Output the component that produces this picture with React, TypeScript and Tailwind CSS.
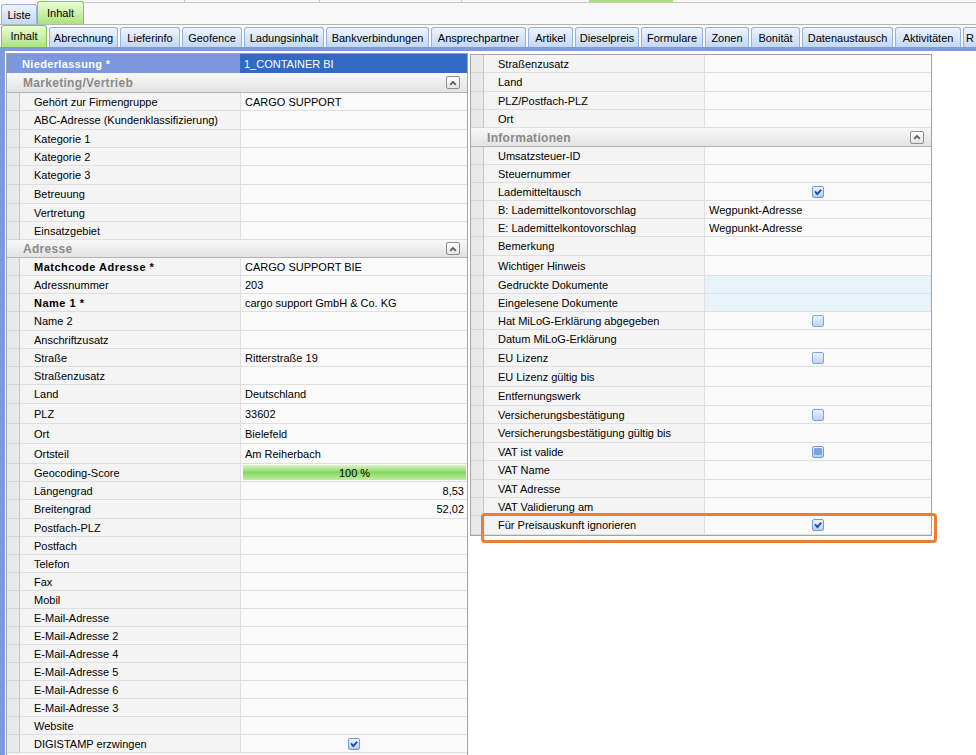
import React from "react";

type CheckState = "on" | "off" | "mixed";

interface Row {
  label: string;
  value?: string;
  h?: number;
  bold?: boolean;
  check?: CheckState;
  right?: boolean;
  progress?: boolean;
  tint?: boolean;
}

const rowHeight: Record<number, string> = {
  17: "h-[17px]",
  18: "h-[18px]",
  19: "h-[19px]",
  20: "h-[20px]",
  21: "h-[21px]",
};

const innerTabs: [string, string][] = [
  ["Abrechnung", "w-[69px]"],
  ["Lieferinfo", "w-[60px]"],
  ["Geofence", "w-[60px]"],
  ["Ladungsinhalt", "w-[80px]"],
  ["Bankverbindungen", "w-[103px]"],
  ["Ansprechpartner", "w-[95px]"],
  ["Artikel", "w-[45px]"],
  ["Dieselpreis", "w-[64px]"],
  ["Formulare", "w-[62px]"],
  ["Zonen", "w-[44px]"],
  ["Bonität", "w-[49px]"],
  ["Datenaustausch", "w-[91px]"],
  ["Aktivitäten", "w-[66px]"],
];

const marketing: Row[] = [
  { label: "Gehört zur Firmengruppe", value: "CARGO SUPPORT" },
  { label: "ABC-Adresse (Kundenklassifizierung)", h: 19 },
  { label: "Kategorie 1" },
  { label: "Kategorie 2" },
  { label: "Kategorie 3", h: 19 },
  { label: "Betreuung", h: 19 },
  { label: "Vertretung" },
  { label: "Einsatzgebiet" },
];

const adresse: Row[] = [
  { label: "Matchcode Adresse *", value: "CARGO SUPPORT BIE", bold: true },
  { label: "Adressnummer", value: "203" },
  { label: "Name 1 *", value: "cargo support GmbH & Co. KG", bold: true },
  { label: "Name 2", h: 19 },
  { label: "Anschriftzusatz" },
  { label: "Straße", value: "Ritterstraße 19" },
  { label: "Straßenzusatz" },
  { label: "Land", value: "Deutschland", h: 19 },
  { label: "PLZ", value: "33602", h: 20 },
  { label: "Ort", value: "Bielefeld", h: 20 },
  { label: "Ortsteil", value: "Am Reiherbach", h: 20 },
  { label: "Geocoding-Score", progress: true },
  { label: "Längengrad", value: "8,53", right: true },
  { label: "Breitengrad", value: "52,02", right: true, h: 19 },
  { label: "Postfach-PLZ" },
  { label: "Postfach" },
  { label: "Telefon" },
  { label: "Fax" },
  { label: "Mobil" },
  { label: "E-Mail-Adresse" },
  { label: "E-Mail-Adresse 2" },
  { label: "E-Mail-Adresse 4" },
  { label: "E-Mail-Adresse 5" },
  { label: "E-Mail-Adresse 6" },
  { label: "E-Mail-Adresse 3" },
  { label: "Website" },
  { label: "DIGISTAMP erzwingen", check: "on" },
];

const rightTop: Row[] = [
  { label: "Straßenzusatz" },
  { label: "Land", h: 19 },
  { label: "PLZ/Postfach-PLZ" },
  { label: "Ort" },
];

const informationen: Row[] = [
  { label: "Umsatzsteuer-ID" },
  { label: "Steuernummer" },
  { label: "Lademitteltausch", check: "on" },
  { label: "B: Lademittelkontovorschlag", value: "Wegpunkt-Adresse" },
  { label: "E: Lademittelkontovorschlag", value: "Wegpunkt-Adresse" },
  { label: "Bemerkung", h: 19 },
  { label: "Wichtiger Hinweis", h: 20 },
  { label: "Gedruckte Dokumente", tint: true },
  { label: "Eingelesene Dokumente", tint: true },
  { label: "Hat MiLoG-Erklärung abgegeben", check: "off" },
  { label: "Datum MiLoG-Erklärung", h: 19 },
  { label: "EU Lizenz", check: "off" },
  { label: "EU Lizenz gültig bis", h: 20 },
  { label: "Entfernungswerk", h: 19 },
  { label: "Versicherungsbestätigung", check: "off" },
  { label: "Versicherungsbestätigung gültig bis", h: 19 },
  { label: "VAT ist valide", check: "mixed" },
  { label: "VAT Name", h: 19 },
  { label: "VAT Adresse" },
  { label: "VAT Validierung am" },
  { label: "Für Preisauskunft ignorieren", check: "on", h: 19 },
];

function Check({ state }: { state: CheckState }) {
  return (
    <span
      className={`flex h-[12px] w-[12px] items-center justify-center rounded-[2px] border ${
        state === "off"
          ? "border-[#7fa6dc] bg-linear-to-b from-[#e9f1fc] to-[#bcd3f2]"
          : "border-[#6c9ad6] bg-linear-to-b from-[#eef5fd] to-[#b4cff2]"
      }`}
    >
      {state === "on" && (
        <svg width="10" height="10" viewBox="0 0 10 10">
          <path
            d="M2 4.4 L4.4 7 L8.2 2.6"
            fill="none"
            stroke="#1f4ea3"
            strokeWidth="1.9"
          />
        </svg>
      )}
      {state === "mixed" && (
        <span className="h-[7px] w-[8px] rounded-[1px] bg-[#7aa3dc]" />
      )}
    </span>
  );
}

function CollapseButton() {
  return (
    <span className="flex h-[13px] w-[14px] items-center justify-center rounded-[2px] border border-[#8e8e8e] bg-linear-to-b from-white to-[#e4e4e4]">
      <svg width="8" height="6" viewBox="0 0 8 6">
        <path d="M1.2 4.8 L4 2 L6.8 4.8" fill="none" stroke="#555" strokeWidth="1.7" />
      </svg>
    </span>
  );
}

function SectionHeader({ title, h = 19 }: { title: string; h?: number }) {
  return (
    <div
      className={`flex ${rowHeight[h]} items-center justify-between border-b border-[#b3b3b3] bg-linear-to-b from-[#f8f8f8] to-[#e3e3e3] pr-[7px] pl-[16px]`}
    >
      <span className="pt-[1px] text-[12px] font-bold tracking-[0.3px] text-[#8a8a8a]">
        {title}
      </span>
      <CollapseButton />
    </div>
  );
}

function GridRow({ row }: { row: Row }) {
  return (
    <div className={`flex ${rowHeight[row.h ?? 18]}`}>
      <div className="w-[13px] shrink-0 border-r border-b border-r-[#c6c6c6] border-b-[#d6d6d6] bg-[#e9e9e9]" />
      <div
        className={`flex w-[220px] shrink-0 items-center border-b border-[#dfdfdf] bg-[#f4f4f4] pt-[1px] pl-[14px] text-black ${
          row.bold ? "font-bold tracking-[0.5px]" : ""
        }`}
      >
        {row.label}
      </div>
      <div
        className={`flex min-w-0 flex-1 items-center border-b border-l border-[#dfdfdf] text-black ${
          row.tint ? "bg-[#e6f3fb]" : "bg-[#fafafa]"
        } ${
          row.check || row.progress
            ? "justify-center"
            : row.right
              ? "justify-end pt-[1px] pr-[3px]"
              : "pt-[1px] pl-[4px]"
        }`}
      >
        {row.check && <Check state={row.check} />}
        {row.progress && (
          <div className="mr-[1px] ml-[2px] flex h-[15px] w-full items-center justify-center bg-linear-to-b from-[#d9f5c4] via-[#86d75c] to-[#bfeda2] pt-[1px] text-black">
            100 %
          </div>
        )}
        {!row.check && !row.progress && row.value}
      </div>
    </div>
  );
}

export default function App() {
  return (
    <div className="relative h-[755px] w-[976px] overflow-hidden bg-white font-['Liberation_Sans',Arial,sans-serif] text-[11px] leading-none">
      {/* outer tabs */}
      <div className="flex h-[25px] items-end border-b border-[#b4b4b4] bg-[#f8f8f8] pl-[1px]">
        <div className="flex h-[20px] w-[36px] items-center justify-center rounded-t-[3px] border border-b-0 border-[#93b2e2] bg-linear-to-b from-[#eef4fd] to-[#c3d8f4] pt-[1px] text-black">
          Liste
        </div>
        <div className="flex h-[23px] w-[47px] items-center justify-center rounded-t-[3px] border border-b-0 border-[#86c456] bg-linear-to-b from-[#ecfbd9] to-[#ace37b] text-black">
          Inhalt
        </div>
        <div className="flex h-[3px] flex-1 self-start border-b border-[#c9c9c9]">
          <div className="w-[101px] border-r border-[#c9c9c9]" />
          <div className="w-[135px] border-r border-[#c9c9c9]" />
          <div className="w-[142px] border-r border-[#c9c9c9]" />
          <div className="w-[127px]" />
          <div className="w-[84px] bg-[#a6e07a]" />
        </div>
      </div>

      {/* inner tabs */}
      <div className="flex h-[22px] items-end gap-[2px] bg-[#fafafa] pl-[1px]">
        <div className="flex h-[22px] w-[46px] shrink-0 items-center justify-center rounded-t-[3px] border border-b-0 border-[#86c456] bg-linear-to-b from-[#ecfbd9] to-[#ace37b] text-black">
          Inhalt
        </div>
        {innerTabs.map(([label, w]) => (
          <div
            key={label}
            className={`flex h-[20px] ${w} shrink-0 items-center justify-center overflow-hidden rounded-t-[3px] border border-b-0 border-[#93b2e2] bg-linear-to-b from-[#eef4fd] to-[#c3d8f4] pt-[1px] text-black`}
          >
            {label}
          </div>
        ))}
        <div className="flex h-[20px] w-[30px] shrink-0 items-center rounded-t-[3px] border border-b-0 border-[#93b2e2] bg-linear-to-b from-[#eef4fd] to-[#c3d8f4] pt-[1px] pl-[2px] text-black">
          R
        </div>
      </div>
      <div className="h-[4px] bg-[#7d9bdc]" />

      {/* content */}
      <div className="flex h-[704px]">
        <div className="w-[5px] shrink-0 bg-[#7d9bdc]" />

        <div className="mt-[2px] ml-[1px] w-[462px] shrink-0 self-start border border-[#a3a3a3]">
          <div className="flex h-[19px]">
            <div className="flex w-[233px] items-center bg-[#7c98dc] pt-[1px] pl-[15px] text-[11px] font-bold tracking-[0.35px] text-white">
              Niederlassung *
            </div>
            <div className="flex flex-1 items-center bg-[#316ac5] pt-[1px] pl-[4px] text-white">
              1_CONTAINER BI
            </div>
          </div>
          <SectionHeader title="Marketing/Vertrieb" h={20} />
          {marketing.map((r) => (
            <GridRow key={r.label} row={r} />
          ))}
          <SectionHeader title="Adresse" h={18} />
          {adresse.map((r) => (
            <GridRow key={r.label} row={r} />
          ))}
          <SectionHeader title="" h={19} />
        </div>

        <div className="mt-[3px] ml-[2px] w-[462px] shrink-0 self-start border border-[#a3a3a3]">
          {rightTop.map((r) => (
            <GridRow key={r.label} row={r} />
          ))}
          <SectionHeader title="Informationen" h={19} />
          {informationen.map((r) => (
            <GridRow key={r.label} row={r} />
          ))}
        </div>
      </div>

      {/* highlight */}
      <div className="absolute top-[513px] left-[481px] h-[30px] w-[456px] rounded-[4px] border-[3px] border-[#ed7d31]" />
    </div>
  );
}
